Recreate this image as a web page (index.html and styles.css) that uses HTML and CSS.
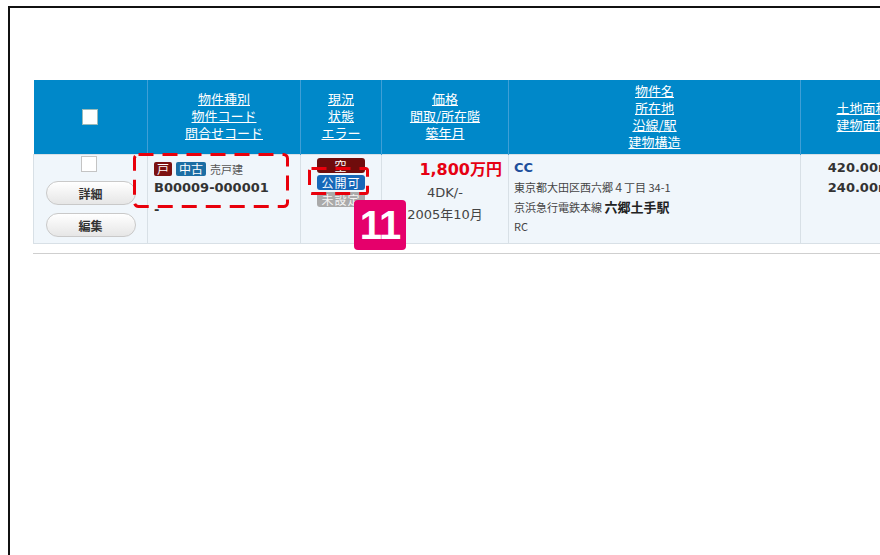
FILE: index.html
```html
<!DOCTYPE html>
<html lang="ja">
<head>
  <meta charset="UTF-8">
  <title>物件一覧</title>
  <link rel="stylesheet" href="styles.css">
</head>
<body>
  <div class="frame">
    <table class="list">
      <colgroup>
        <col class="c-check">
        <col class="c-code">
        <col class="c-status">
        <col class="c-price">
        <col class="c-name">
        <col class="c-area">
      </colgroup>
      <thead>
        <tr>
          <th><span class="check check-head"></span></th>
          <th><a href="#">物件種別</a><br><a href="#">物件コード</a><br><a href="#">問合せコード</a></th>
          <th><a href="#">現況</a><br><a href="#">状態</a><br><a href="#">エラー</a></th>
          <th><a href="#">価格</a><br><a href="#">間取/所在階</a><br><a href="#">築年月</a></th>
          <th><a href="#">物件名</a><br><a href="#">所在地</a><br><a href="#">沿線/駅</a><br><a href="#">建物構造</a></th>
          <th><a href="#">土地面積</a><br><a href="#">建物面積</a></th>
        </tr>
      </thead>
      <tbody>
        <tr>
          <td class="cell-check">
            <span class="check"></span>
            <button class="btn">詳細</button>
            <button class="btn">編集</button>
          </td>
          <td class="cell-code">
            <div class="kind"><span class="tag tag-red">戸</span><span class="tag tag-blue">中古</span><span class="kind-name">売戸建</span></div>
            <div class="code">B00009-000001</div>
            <div class="code-sub">-</div>
          </td>
          <td class="cell-status">
            <span class="state state-red">空</span>
            <span class="state state-blue">公開可</span>
            <span class="state state-gray">未設定</span>
          </td>
          <td class="cell-price">
            <div class="price">1,800万円</div>
            <div class="sub">4DK/-</div>
            <div class="sub">2005年10月</div>
          </td>
          <td class="cell-name">
            <div class="name">CC</div>
            <div class="addr">東京都大田区西六郷４丁目 34-1</div>
            <div class="line">京浜急行電鉄本線 <b>六郷土手駅</b></div>
            <div class="addr">RC</div>
          </td>
          <td class="cell-area">
            <div>420.00m²</div>
            <div>240.00m²</div>
          </td>
        </tr>
      </tbody>
    </table>
    <div class="rule"></div>

    <svg class="marks" width="700" height="260">
      <rect x="124.5" y="146.5" width="153" height="52" rx="4" />
      <rect x="299.5" y="160.5" width="58" height="25" rx="2" />
    </svg>
    <div class="step">11</div>
  </div>
</body>
</html>
```

FILE: styles.css
```css
body {
  margin: 0;
  overflow: hidden;
  background-color: #fff;
  font-family: "DejaVu Sans", "Noto Sans CJK JP", sans-serif;
  color: #333;
}
.frame {
  position: relative;
  margin: 6px 0 0 8px;
  width: 960px;
  height: 620px;
  padding: 72px 0 0 23px;
  border: 2px solid #111;
  box-sizing: border-box;
}
.list {
  width: 891px;
  table-layout: fixed;
  border-collapse: collapse;
}
.c-check { width: 114px; }
.c-code { width: 153px; }
.c-status { width: 81px; }
.c-price { width: 127px; }
.c-name { width: 292px; }
.c-area { width: 124px; }

.list th {
  height: 71px;
  padding: 0 0 3px;
  background-color: #0088c9;
  border-right: 1px solid #3f9fd6;
  font-family: "Noto Sans CJK JP", sans-serif;
  font-weight: normal;
  font-size: 13px;
  line-height: 17px;
  text-align: center;
  vertical-align: middle;
}
.list th a {
  color: #fff;
  text-decoration: underline;
}
.list td {
  padding: 0;
  background-color: #f0f6fb;
  border: 1px solid #d8e0e6;
  vertical-align: top;
  font-size: 13px;
}

.check {
  display: block;
  width: 14px;
  height: 14px;
  margin: 0 auto;
  background-color: #fff;
  border: 1px solid #c4c4c4;
}
.check-head {
  margin-top: 3px;
  border-color: #9bb;
}
.cell-check {
  padding: 1px 0 6px !important;
  text-align: center;
}
.cell-check .check {
  position: relative;
  left: -2px;
}
.btn {
  display: block;
  width: 90px;
  height: 24px;
  margin: 9px auto 0;
  padding: 0;
  border: 1px solid #c9c9c9;
  border-radius: 12px;
  background: linear-gradient(#ffffff, #e6e6e6);
  font-family: "Noto Sans CJK JP", sans-serif;
  font-size: 12px;
  font-weight: bold;
  color: #333;
}
.btn + .btn {
  margin-top: 8px;
}

.cell-code {
  padding: 6px 0 0 6px !important;
}
.kind {
  height: 16px;
  display: flex;
  align-items: center;
  gap: 4px;
  font-family: "Noto Sans CJK JP", sans-serif;
}
.tag {
  height: 14px;
  padding: 0 3px;
  border-radius: 2px;
  color: #fff;
  font-size: 12px;
  line-height: 14px;
}
.tag-red { background-color: #7c1111; }
.tag-blue { background-color: #1c6ea4; }
.kind-name {
  font-size: 11px;
  color: #555;
}
.code {
  line-height: 22px;
  font-weight: bold;
  color: #333;
}
.code-sub {
  line-height: 22px;
  font-weight: bold;
}

.cell-status {
  padding-top: 3px !important;
  text-align: center;
}
.state {
  display: block;
  width: 48px;
  height: 15px;
  margin: 0 auto 2px;
  border-radius: 3px;
  color: #fff;
  font-family: "Noto Sans CJK JP", sans-serif;
  font-size: 12px;
  line-height: 15px;
  letter-spacing: 1px;
}
.state-red { background-color: #6f0c0c; }
.state-blue { background-color: #1768b9; }
.state-gray { background-color: #aaaaaa; color: #f4f4f4; }

.cell-price {
  padding-top: 5px !important;
  text-align: center;
}
.price {
  padding-right: 6px;
  text-align: right;
  line-height: 20px;
  font-size: 16px;
  font-weight: bold;
  color: #e60012;
}
.price + .sub {
  margin-top: 2px;
}
.sub {
  line-height: 22px;
  color: #444;
}

.cell-name {
  padding: 3px 0 0 5px !important;
  font-family: "Noto Sans CJK JP", sans-serif;
}
.name {
  line-height: 20px;
  font-family: "DejaVu Sans", sans-serif;
  font-weight: bold;
  color: #1d4f9c;
}
.addr {
  line-height: 19px;
  font-size: 11px;
  color: #444;
}
.line {
  line-height: 20px;
  font-size: 11px;
  color: #444;
}
.line b {
  font-size: 13px;
  color: #222;
}

.cell-area {
  padding-top: 3px !important;
  text-align: center;
  font-weight: bold;
  line-height: 20px;
}

.rule {
  width: 900px;
  margin-top: 9px;
  border-top: 1px solid #cfcfcf;
}

.marks {
  position: absolute;
  left: 0;
  top: 0;
}
.marks rect {
  fill: none;
  stroke: #e8000b;
  stroke-width: 3;
  stroke-dasharray: 15 9;
}
.step {
  position: absolute;
  left: 344px;
  top: 192px;
  width: 52px;
  height: 50px;
  border-radius: 4px;
  background-color: #e5006b;
  color: #fff;
  font-family: "Liberation Sans", sans-serif;
  font-size: 40px;
  font-weight: bold;
  line-height: 50px;
  text-align: center;
  letter-spacing: -1px;
}
```
